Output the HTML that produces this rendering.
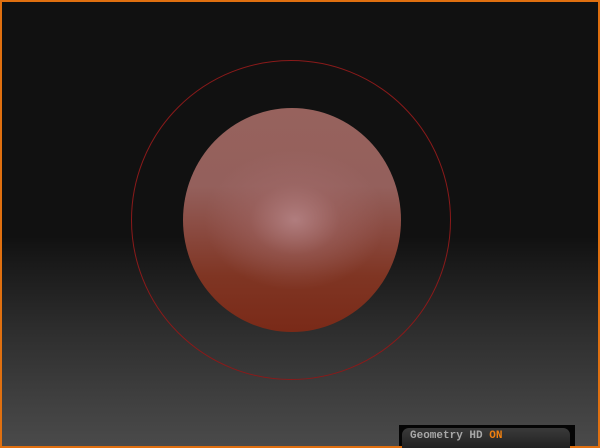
<!DOCTYPE html>
<html><head><style>
html,body{margin:0;padding:0;}
body{width:600px;height:448px;overflow:hidden;background:#e07010;position:relative;}
#v{position:absolute;left:2px;top:2px;width:596px;height:444px;
background:linear-gradient(to bottom,#111 0px,#111 235px,#1c1c1c 270px,#2e2e2e 330px,#404040 400px,#4a4a4a 444px);}
#ring{position:absolute;left:131px;top:60px;width:320px;height:320px;border:1px solid #8a1a1a;border-radius:50%;box-sizing:border-box;}
#sph{position:absolute;left:183px;top:108px;width:218px;height:224px;border-radius:50%;
background:radial-gradient(ellipse 90px 70px at 112px 112px,rgba(180,130,132,0.9) 0%,rgba(165,110,110,0.4) 50%,rgba(160,100,100,0) 100%),
linear-gradient(to bottom,#97625d 0%,#94605c 35%,#8a4a40 55%,#7f3523 75%,#7a2a18 100%);}
#bar{position:absolute;left:399px;top:425px;width:176px;height:21px;background:#050505;}
#pill{position:absolute;left:402px;top:428px;width:168px;height:20px;border-radius:7px 7px 0 0;background:linear-gradient(#3a3a3a,#222);
font:bold 11px "Liberation Mono",monospace;color:#a8a8a8;line-height:16px;padding-left:8px;box-sizing:border-box;}
#pill b{color:#f08010;}
</style></head><body>
<div id="v"></div>
<div id="ring"></div>
<div id="sph"></div>
<div id="bar"></div>
<div id="pill">Geometry HD <b>ON</b></div>
</body></html>
